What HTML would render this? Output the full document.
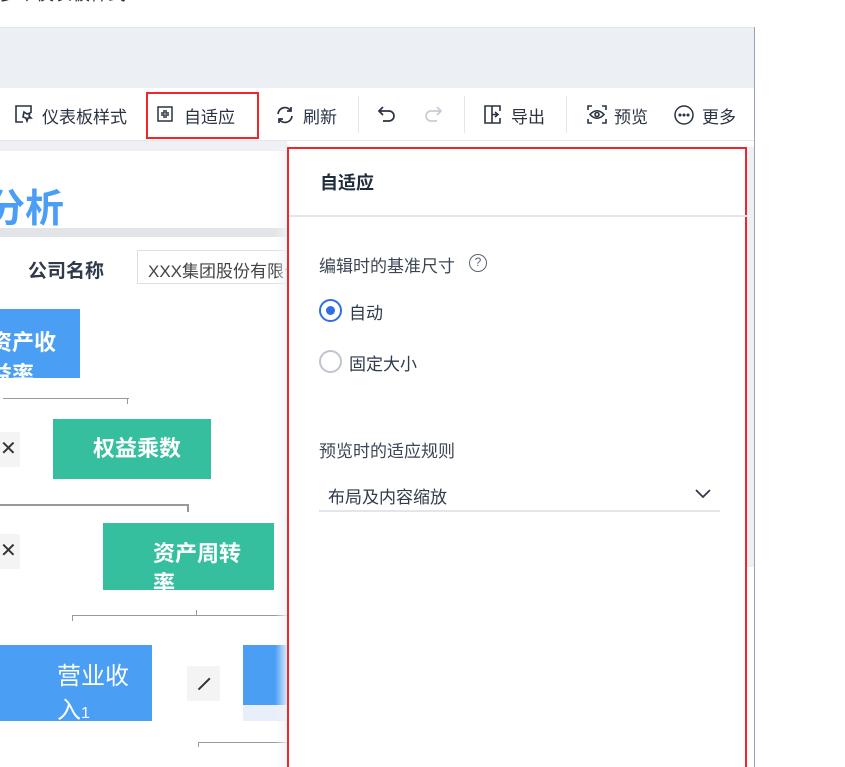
<!DOCTYPE html>
<html><head><meta charset="utf-8"><style>
*{margin:0;padding:0;box-sizing:border-box}
html,body{width:845px;height:767px;overflow:hidden}
body{background:#fff;font-family:"Liberation Sans","Noto Sans CJK SC",sans-serif;position:relative;color:#1f2d3d}
.a{position:absolute}
.tb{font-size:17px;color:#2a3344;top:103px;white-space:nowrap}
.box{position:absolute;color:#fff;font-weight:bold;font-size:22px;overflow:hidden}
.ln{position:absolute;background:#999;height:2px}
.tk{position:absolute;background:#999;width:2px;height:8px}
</style></head><body>
<div class="a" style="left:0;top:-20px;font-size:18px;color:#333">多个仪表板样式</div>
<div class="a" style="left:0;top:27px;width:754px;height:61px;background:#eceff4;border-top:1px solid #e2e5ea"></div>
<div class="a" style="left:754px;top:27px;width:1px;height:740px;background:#9aa3b3"></div>
<div class="a" style="left:0;top:88px;width:754px;height:53px;background:#fff;border-bottom:1px solid #e5e7eb"></div>
<div class="a" style="left:0;top:141px;width:287px;height:10px;background:#eef0f3"></div>
<svg class="a" style="left:15px;top:105px" width="18" height="18" viewBox="0 0 18 18" fill="none" stroke="#2a3344" stroke-width="1.6"><path d="M16 8V1H1v16h7"/><path d="M9 7l3 2 3-1-1 3 2 2-3 0-1 3-1-3-3-1z"/></svg>
<div class="a tb" style="left:42px">仪表板样式</div>
<div class="a" style="left:146px;top:92px;width:113px;height:47px;border:2px solid #f0262b"></div>
<svg class="a" style="left:157px;top:106px" width="16" height="16" viewBox="0 0 16 16" fill="none" stroke="#2a3344" stroke-width="1.5"><rect x="1" y="1" width="14" height="14"/><path d="M7 4v3H4M9 4v3h3M7 12V9H4M9 12V9h3"/></svg>
<div class="a tb" style="left:184px">自适应</div>
<svg class="a" style="left:275px;top:105px" width="20" height="20" viewBox="0 0 20 20" fill="none" stroke="#2a3344" stroke-width="1.7"><path d="M3 9a7 7 0 0 1 13-3M17 11a7 7 0 0 1-13 3"/><path d="M16 2v4h-4M4 18v-4h4"/></svg>
<div class="a tb" style="left:303px">刷新</div>
<div class="a" style="left:358px;top:96px;width:1px;height:37px;background:#e3e6ea"></div>
<svg class="a" style="left:378px;top:106px" width="18" height="16" viewBox="0 0 18 16" fill="none" stroke="#2a3344" stroke-width="1.7"><path d="M5 1L1 5l4 4M1 5h10a5 5 0 0 1 0 10H5"/></svg>
<svg class="a" style="left:424px;top:106px" width="18" height="16" viewBox="0 0 18 16" fill="none" stroke="#c7ccd4" stroke-width="1.7"><path d="M13 1l4 4-4 4M17 5H7a5 5 0 0 0 0 10h6"/></svg>
<div class="a" style="left:464px;top:96px;width:1px;height:37px;background:#e3e6ea"></div>
<svg class="a" style="left:484px;top:105px" width="20" height="19" viewBox="0 0 20 19" fill="none" stroke="#2a3344" stroke-width="1.6"><path d="M8 1H1v17h7V1h8v5M16 13v5H8"/><path d="M11 7l3 2.5-3 2.5M8 9.5h6"/></svg>
<div class="a tb" style="left:511px">导出</div>
<div class="a" style="left:566px;top:96px;width:1px;height:37px;background:#e3e6ea"></div>
<svg class="a" style="left:587px;top:105px" width="20" height="19" viewBox="0 0 20 19" fill="none" stroke="#2a3344" stroke-width="1.6"><path d="M1 5V1h4M15 1h4v4M19 14v4h-4M5 18H1v-4"/><path d="M3 9.5Q10 2 17 9.5Q10 17 3 9.5z"/><circle cx="10" cy="9.5" r="2"/></svg>
<div class="a tb" style="left:614px">预览</div>
<svg class="a" style="left:674px;top:105px" width="20" height="20" viewBox="0 0 20 20" fill="none" stroke="#2a3344" stroke-width="1.5"><circle cx="10" cy="10" r="9"/><circle cx="6" cy="10" r=".8" fill="#2a3344"/><circle cx="10" cy="10" r=".8" fill="#2a3344"/><circle cx="14" cy="10" r=".8" fill="#2a3344"/></svg>
<div class="a tb" style="left:702px">更多</div>
<div class="a" style="left:-14px;top:186px;font-size:39px;font-weight:bold;color:#4a9ff5;line-height:48px;height:42px;overflow:hidden">分析</div>
<div class="a" style="left:0;top:228px;width:287px;height:9px;background:#e2e4e8"></div>
<div class="a" style="left:28px;top:256px;font-size:19px;font-weight:bold;color:#2f3a4a">公司名称</div>
<div class="a" style="left:137px;top:250px;width:160px;height:34px;border:1px solid #dcdfe6;border-right:none;font-size:17px;color:#444;padding:6px 0 0 10px;white-space:nowrap;overflow:hidden">XXX集团股份有限公司</div>
<div class="box" style="left:0;top:309px;width:80px;height:69px;background:#4a9ff5"><div style="position:absolute;left:-10px;top:16px;white-space:nowrap">资产收<br>益率</div></div>
<div class="ln" style="left:3px;top:398px;width:126px;height:1px"></div><div class="tk" style="left:127px;top:398px;height:6px;width:1px"></div>
<div class="a" style="left:0;top:432px;width:20px;height:35px;background:#f4f4f4;font-size:20px;line-height:35px;color:#333">✕</div>
<div class="box" style="left:53px;top:419px;width:158px;height:60px;background:#36bf9f;text-align:center;line-height:60px;padding-left:10px">权益乘数</div>
<div class="ln" style="left:0;top:504px;width:189px"></div><div class="tk" style="left:187px;top:504px"></div>
<div class="a" style="left:0;top:534px;width:20px;height:35px;background:#f4f4f4;font-size:20px;line-height:35px;color:#333">✕</div>
<div class="box" style="left:103px;top:523px;width:171px;height:67px;background:#36bf9f"><div style="position:absolute;left:50px;top:16px;line-height:30px">资产周转<br>率</div></div>
<div class="ln" style="left:72px;top:615px;width:215px;height:1px"></div><div class="tk" style="left:72px;top:615px;width:1px;height:6px"></div><div class="tk" style="left:196px;top:610px;width:1px;height:6px"></div>
<div class="box" style="left:0;top:645px;width:152px;height:76px;background:#4a9ff5;font-weight:normal;font-size:24px"><div style="position:absolute;left:57px;top:15px;line-height:34px">营业收<br>入<span style="font-size:16px">1</span></div></div>
<div class="a" style="left:187px;top:666px;width:33px;height:35px;background:#f4f4f4"></div>
<div class="a" style="left:196px;top:683px;width:16px;height:1.5px;background:#333;transform:rotate(-45deg)"></div>
<div class="a" style="left:243px;top:645px;width:44px;height:60px;background:#4a9ff5"></div>
<div class="a" style="left:243px;top:705px;width:44px;height:16px;background:#e8eefa"></div>
<div class="ln" style="left:198px;top:742px;width:89px;height:1px"></div><div class="tk" style="left:198px;top:742px;width:1px;height:5px"></div>
<div class="a" style="left:275px;top:147px;width:14px;height:620px;background:linear-gradient(to right,rgba(240,242,246,0),#f2f3f6)"></div>
<div class="a" style="left:287px;top:147px;width:460px;height:620px;border:2px solid #f0262b;border-bottom:none;background:#fff"></div>
<div class="a" style="left:289px;top:215px;width:464px;height:2px;background:#e3e5ea"></div>
<div class="a" style="left:747px;top:147px;width:7px;height:420px;background:#eef0f3"></div>
<div class="a" style="left:320px;top:169px;font-size:18px;font-weight:bold;color:#1f2d3d">自适应</div>
<div class="a" style="left:319px;top:252px;font-size:17px;color:#3d4655">编辑时的基准尺寸</div>
<div class="a" style="left:469px;top:254px;width:18px;height:18px;border:1.5px solid #5a6475;border-radius:50%;font-size:12px;line-height:15px;text-align:center;color:#5a6475">?</div>
<div class="a" style="left:319px;top:299px;width:23px;height:23px;border:2px solid #2f6fe4;border-radius:50%"></div>
<div class="a" style="left:326px;top:306px;width:9px;height:9px;background:#2f6fe4;border-radius:50%"></div>
<div class="a" style="left:349px;top:299px;font-size:17px;color:#2f3a4a">自动</div>
<div class="a" style="left:319px;top:350px;width:23px;height:23px;border:2px solid #bfc5cf;border-radius:50%"></div>
<div class="a" style="left:349px;top:350px;font-size:17px;color:#2f3a4a">固定大小</div>
<div class="a" style="left:319px;top:437px;font-size:17px;color:#3d4655">预览时的适应规则</div>
<div class="a" style="left:328px;top:483px;font-size:17px;color:#2f3a4a">布局及内容缩放</div>
<svg class="a" style="left:695px;top:489px" width="16" height="10" viewBox="0 0 16 10" fill="none" stroke="#2f3a4a" stroke-width="1.8"><path d="M1 1l7 7 7-7"/></svg>
<div class="a" style="left:319px;top:510px;width:401px;height:2px;background:#e3e5ea"></div>
</body></html>
